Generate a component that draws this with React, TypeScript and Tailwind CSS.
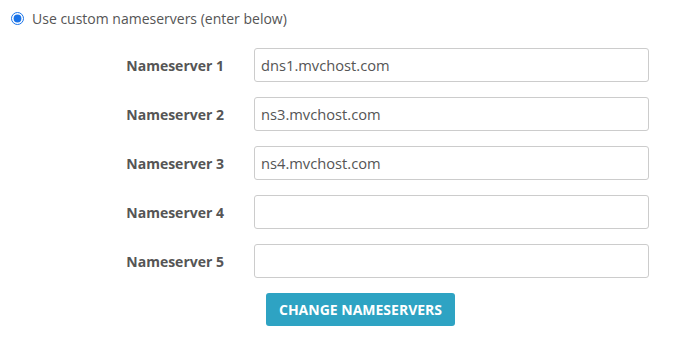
import React from 'react';

const servers = ['dns1.mvchost.com', 'ns3.mvchost.com', 'ns4.mvchost.com', '', ''];

export default function App() {
  return (
    <div className="w-[698px] h-[353px] pt-[8px] bg-white font-['Open_Sans',sans-serif] text-[#555]">
      <label className="flex items-center h-[20px] pl-[11px] text-[14px]">
        <input type="radio" defaultChecked className="w-[13px] h-[13px] m-0 accent-[#1a73e8]" />
        <span className="ml-[8px]">Use custom nameservers (enter below)</span>
      </label>
      <div className="mt-[20px] flex flex-col gap-[15px]">
        {servers.map((value, i) => (
          <div key={i} className="flex items-center h-[34px]">
            <div className="w-[224px] text-right text-[14px] font-bold">Nameserver {i + 1}</div>
            <input
              defaultValue={value}
              className="ml-[30px] w-[395px] h-[34px] px-[6px] text-[14.7px] text-[#555] border border-[#ccc] rounded-[3px] outline-none"
            />
          </div>
        ))}
      </div>
      <button className="mt-[15px] ml-[266px] w-[189px] h-[33px] rounded-[3px] bg-[#2ea3c3] text-white text-[14px] font-bold uppercase">
        Change Nameservers
      </button>
    </div>
  );
}
